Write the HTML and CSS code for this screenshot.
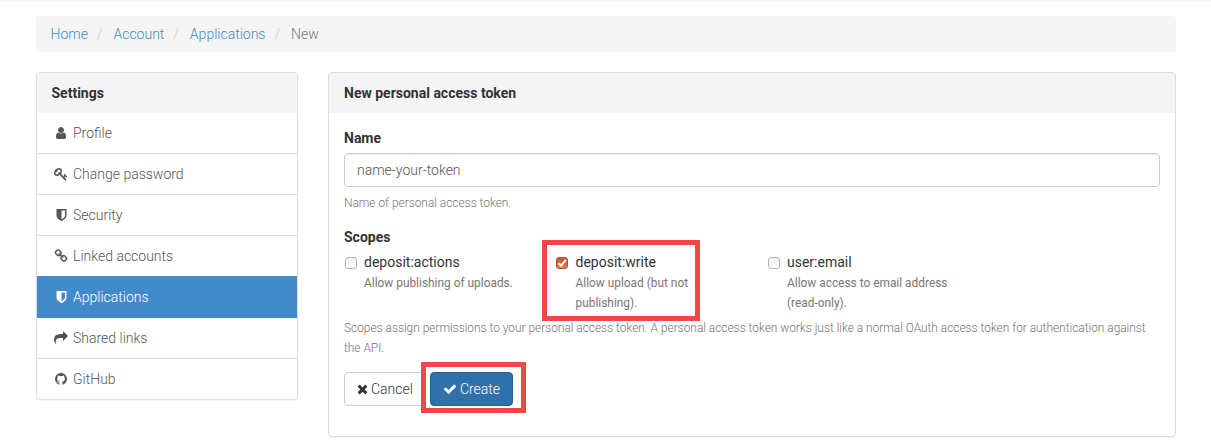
FILE: index.html
```html
<!DOCTYPE html>
<html lang="en">
<head>
<meta charset="utf-8">
<title>New personal access token</title>
<link rel="stylesheet" href="styles.css">
</head>
<body>
<div class="topbar"></div>
<div class="container">
  <nav class="breadcrumb"><a>Home</a><i>/</i><a>Account</a><i>/</i><a>Applications</a><i>/</i><span>New</span></nav>
  <div class="layout">
    <aside class="panel sidebar">
      <div class="panel-heading">Settings</div>
      <a class="item"><svg class="icon" viewBox="0 0 1792 1792"><path d="M1536 1399q0 109-62.5 187t-150.5 78h-854q-88 0-150.5-78t-62.5-187q0-85 8.5-160.5t31.5-152 58.5-131 94-89 134.5-34.5q131 128 313 128t313-128q76 0 134.5 34.5t94 89 58.5 131 31.5 152 8.5 160.5zm-256-887q0 159-112.5 271.5t-271.5 112.5-271.5-112.5-112.5-271.5 112.5-271.5 271.5-112.5 271.5 112.5 112.5 271.5z"/></svg>Profile</a>
      <a class="item"><svg class="icon" viewBox="0 0 1792 1792"><path d="M832 512q0-80-56-136t-136-56-136 56-56 136q0 42 19 83-41-19-83-19-80 0-136 56t-56 136 56 136 136 56 136-56 56-136q0-42-19-83 41 19 83 19 80 0 136-56t56-136zm851 704q0 17-49 66t-66 49q-9 0-28.5-16t-36.5-33-38.5-40-24.5-26l-96 96 220 220q28 28 28 68 0 42-39 81t-81 39q-40 0-68-28l-671-671q-176 131-365 131-163 0-265.5-102.5t-102.5-265.5q0-160 95-313t248-248 313-95q163 0 265.5 102.5t102.5 265.5q0 189-131 365l355 355 96-96q-3-3-26-24.5t-40-38.5-33-36.5-16-28.5q0-17 49-66t66-49q13 0 23 10 6 6 46 44.5t82 79.5 86.5 86 73 78 28.5 41z"/></svg>Change password</a>
      <a class="item"><svg class="icon" viewBox="0 0 1792 1792"><path d="M1408 960v-640h-448v1137q119-63 213-137 235-184 235-360zm192-768v768q0 86-33.5 170.5t-83 150-118 127.5-126.5 103-121 77.5-89.5 49.5-42.5 20q-12 6-26 6t-26-6q-16-7-42.5-20t-89.5-49.5-121-77.5-126.5-103-118-127.5-83-150-33.5-170.5v-768q0-26 19-45t45-19h1152q26 0 45 19t19 45z"/></svg>Security</a>
      <a class="item"><svg class="icon" viewBox="0 0 1792 1792"><path d="M1520 1216q0-40-28-68l-208-208q-28-28-68-28-42 0-72 32 3 3 19 18.5t21.5 21.5 15 19 13 25.5 3.5 27.5q0 40-28 68t-68 28q-15 0-27.5-3.5t-25.5-13-19-15-21.5-21.5-18.5-19q-33 31-33 73 0 40 28 68l206 207q27 27 68 27 40 0 68-26l147-146q28-28 28-67zm-703-705q0-40-28-68l-206-207q-28-28-68-28-39 0-68 27l-147 146q-28 28-28 67 0 40 28 68l208 208q27 27 68 27 42 0 72-31-3-3-19-18.5t-21.5-21.5-15-19-13-25.5-3.5-27.5q0-40 28-68t68-28q15 0 27.5 3.5t25.5 13 19 15 21.5 21.5 18.5 19q33-31 33-73zm895 705q0 120-85 203l-147 146q-83 83-203 83-121 0-204-85l-206-207q-83-83-83-203 0-123 88-209l-88-88q-86 88-208 88-120 0-204-84l-208-208q-84-84-84-204t85-203l147-146q83-83 203-83 121 0 204 85l206 207q83 83 83 203 0 123-88 209l88 88q86-88 208-88 120 0 204 84l208 208q84 84 84 204z"/></svg>Linked accounts</a>
      <a class="item active"><svg class="icon" viewBox="0 0 1792 1792"><path d="M1408 960v-640h-448v1137q119-63 213-137 235-184 235-360zm192-768v768q0 86-33.5 170.5t-83 150-118 127.5-126.5 103-121 77.5-89.5 49.5-42.5 20q-12 6-26 6t-26-6q-16-7-42.5-20t-89.5-49.5-121-77.5-126.5-103-118-127.5-83-150-33.5-170.5v-768q0-26 19-45t45-19h1152q26 0 45 19t19 45z"/></svg>Applications</a>
      <a class="item"><svg class="icon" viewBox="0 0 1792 1792"><path d="M1792 640q0 26-19 45l-512 512q-19 19-45 19t-45-19-19-45v-256h-224q-98 0-175.5 6t-154 21.5-133 42.5-105.5 69.5-80 101-48.5 138.5-17.5 181q0 55 5 123 0 6 2.5 23.5t2.5 26.5q0 15-8.5 25t-23.5 10q-16 0-28-17-7-9-13-22t-13.5-30-10.5-24q-127-285-127-451 0-199 53-333 162-403 875-403h224v-256q0-26 19-45t45-19 45 19l512 512q19 19 19 45z"/></svg>Shared links</a>
      <a class="item"><svg class="icon" viewBox="0 0 1792 1792"><path d="M896 128q209 0 385.5 103t279.5 279.5 103 385.5q0 251-146.5 451.5t-378.5 277.5q-27 5-40-7t-13-30q0-3 .5-76.5t.5-134.5q0-97-52-142 57-6 102.5-18t94-39 81-66.5 53-105 20.5-150.5q0-119-79-206 37-91-8-204-28-9-81 11t-92 44l-38 24q-93-26-192-26t-192 26q-16-11-42.5-27t-83.5-38.5-85-13.5q-45 113-8 204-79 87-79 206 0 85 20.5 150t52.5 105 80.5 67 94 39 102.5 18q-39 36-49 103-21 10-45 15t-57 5-65.5-21.5-55.5-62.5q-19-32-48.5-52t-49.5-24l-20-3q-21 0-29 4.5t-5 11.5 9 14 13 12l7 5q22 10 43.5 38t31.5 51l10 23q13 38 44 61.5t67 30 69.5 7 55.5-3.5l23-4q0 38 .5 88.5t.5 54.5q0 18-13 30t-40 7q-232-77-378.5-277.5t-146.5-451.5q0-209 103-385.5t279.5-279.5 385.5-103z"/></svg>GitHub</a>
    </aside>
    <main class="panel main">
      <div class="panel-heading">New personal access token</div>
      <form class="panel-body">
        <label class="field-label" for="name">Name</label>
        <input class="text-input" id="name" type="text" value="name-your-token">
        <p class="help">Name of personal access token.</p>
        <div class="field-label scopes-label">Scopes</div>
        <div class="scopes">
          <div class="scope"><span class="box"></span><div>deposit:actions<small>Allow publishing of uploads.</small></div></div>
          <div class="scope marked"><span class="box checked"><svg viewBox="0 0 12 12"><path d="M2.5 6.2 5 8.8 9.8 2.8"/></svg></span><div>deposit:write<small>Allow upload (but not publishing).</small></div></div>
          <div class="scope"><span class="box"></span><div>user:email<small>Allow access to email address (read-only).</small></div></div>
        </div>
        <p class="help">Scopes assign permissions to your personal access token. A personal access token works just like a normal OAuth access token for authentication against the API.</p>
        <div class="actions">
          <a class="btn"><svg class="btn-icon times" viewBox="192 0 1408 1792"><path d="M1490 1322q0 40-28 68l-136 136q-28 28-68 28t-68-28l-294-294-294 294q-28 28-68 28t-68-28l-136-136q-28-28-28-68t28-68l294-294-294-294q-28-28-28-68t28-68l136-136q28-28 68-28t68 28l294 294 294-294q28-28 68-28t68 28l136 136q28 28 28 68t-28 68l-294 294 294 294q28 28 28 68z"/></svg>Cancel</a>
          <div class="primary-wrap"><a class="btn primary"><svg class="btn-icon" viewBox="0 0 1792 1792"><path d="M1671 566q0 40-28 68l-724 724-136 136q-28 28-68 28t-68-28l-136-136-362-362q-28-28-28-68t28-68l136-136q28-28 68-28t68 28l294 295 656-657q28-28 68-28t68 28l136 136q28 28 28 68z"/></svg>Create</a></div>
        </div>
      </form>
    </main>
  </div>
</div>
</body>
</html>
```
FILE: styles.css
```css
*, *::before, *::after { box-sizing: border-box; }
body { margin: 0; height: 447px; overflow: hidden; background: #fff; color: #333; font: 300 14px/20px Roboto, sans-serif; }
.topbar { height: 3px; background: linear-gradient(#f1f1f1, #fff); }
.container { width: 1140px; margin: 13px 0 0 35.5px; }
.breadcrumb { display: flex; height: 36px; padding: 8px 15px; margin-bottom: 20px; background: #f5f5f5; border-radius: 4px; }
.breadcrumb a { color: #428bca; }
.breadcrumb i { width: 25.5px; padding-left: 9px; color: #ccc; font-style: normal; }
.breadcrumb span { color: #777; }
.layout { display: flex; justify-content: space-between; align-items: flex-start; }
.panel { border: 1px solid #ddd; border-radius: 4px; box-shadow: 0 1px 1px rgba(0,0,0,.05); background: #fff; }
.sidebar { width: 262.5px; overflow: hidden; }
.main { width: 847.5px; height: 365px; }
.panel-heading { height: 40px; padding: 10px 15px; background: #f5f5f5; border-radius: 3px 3px 0 0; font-weight: 700; }
.item { display: flex; align-items: center; height: 41px; padding: 0 15px; border-bottom: 1px solid #ddd; color: #555; }
.item:last-child { height: 40px; border-bottom: 0; }
.item.active { color: #fff; background: #428bca; border-color: #428bca; margin-top: -1px; height: 42px; }
.icon { width: 14px; height: 14px; margin: 0 5.5px 0 2px; fill: #555; }
.active .icon { fill: #fff; }
.panel-body { padding: 15px; }
.field-label { display: block; margin-bottom: 5px; font-weight: 700; }
.text-input { display: block; width: 100%; height: 34px; padding: 6px 12px; border: 1px solid #ccc; border-radius: 4px; box-shadow: inset 0 1px 1px rgba(0,0,0,.075); color: #555; font: inherit; }
.help { margin: 6px 0 14px; color: #737373; font-size: 11.9px; }
.scopes { display: flex; gap: 30px; }
.scope { display: flex; gap: 6px; width: 181.5px; font-weight: 400; position: relative; }
.scope small { display: block; width: 162px; margin: 1px 0 -1px; color: #777; font-size: 11.9px; }
.marked small { width: 125px; }
.box { flex: none; width: 12px; height: 12px; margin: 5px 1px 0; border: 1px solid #b5b5b5; border-radius: 3px; background: linear-gradient(#f1f1f1, #fff); }
.marked .box { margin: 5px 1.5px 0 .5px; }
.checked { border-color: #a9512e; background: linear-gradient(#d35326, #e57b51); }
.checked svg { display: block; width: 12px; height: 12px; margin: -1px; fill: none; stroke: #fff; stroke-width: 2; }
.marked::before { content: ""; position: absolute; left: -14px; top: -12px; width: 158px; height: 81px; border: 5px solid #ee4848; }
.actions { display: flex; gap: 4px; }
.btn { display: flex; align-items: center; height: 34px; padding: 0 12px; border: 1px solid #ccc; border-radius: 4px; color: #333; }
.btn-icon { width: 14px; height: 14px; margin-right: 3px; fill: #333; }
.times { width: 11px; }
.primary-wrap { position: relative; }
.primary { color: #fff; background: #3071a9; border-color: #285e8e; }
.primary .btn-icon { fill: #fff; }
.primary-wrap::after { content: ""; position: absolute; left: -9px; top: -10px; width: 105px; height: 51px; border: 5px solid #ee4848; }
```
